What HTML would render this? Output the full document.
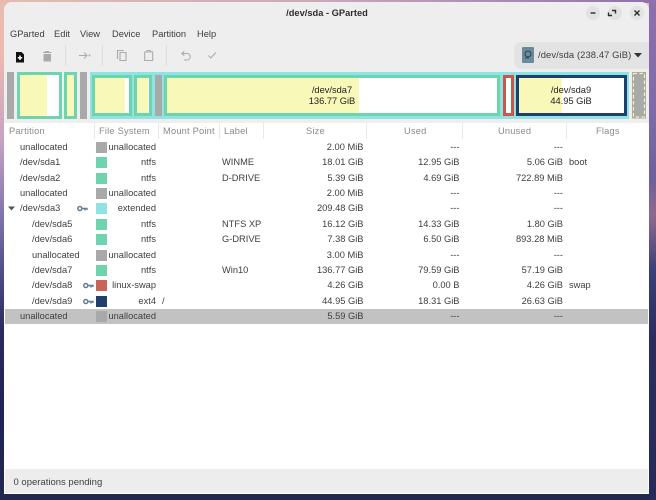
<!DOCTYPE html>
<html><head><meta charset="utf-8"><style>
*{box-sizing:border-box;margin:0;padding:0}
html,body{width:656px;height:500px;overflow:hidden}
body{position:relative;font-family:"Liberation Sans",sans-serif;font-size:9.3px;color:#3e3e3e;
background:linear-gradient(180deg,#e9bfb2 0,#e8b9b0 60px,#c6a3c4 140px,#8f7fb0 200px,#50508a 270px,#2a2c5a 330px,#1f2350 420px,#23284f 500px)}
.wp-r{position:absolute;left:649px;top:0;width:7px;height:500px;background:linear-gradient(180deg,#8f6fae 0,#7c6aa8 120px,#6d5f9c 180px,#8d6a8f 215px,#3a3f78 270px,#2a2c60 340px,#262a5a 500px)}
.wp-t{position:absolute;left:0;top:0;width:656px;height:3px;background:linear-gradient(90deg,#e6bcae,#c9a8bb 50%,#8f6fae)}
.win{position:absolute;left:4px;top:2px;width:645px;height:492px;background:#fff;border-radius:8px 8px 0 0;overflow:hidden}
.a{position:absolute;white-space:nowrap}
.hb{position:absolute;left:4px;top:2px;width:645px;height:121px;background:#eeeeee;border-radius:8px 8px 0 0}
.menu{top:28.500px;line-height:11px}
.sep{position:absolute;top:45px;width:1px;height:21px;background:#dcdcdc}
.seg{position:absolute;border:3px solid #6fd3ad;background:#fff}
.seg i{position:absolute;left:0;top:0;bottom:0;background:#f8f8b8}
.un{position:absolute;background:#a9a9a9}
.h{position:absolute;top:125px;line-height:12px;color:#8a8a8a;font-weight:400;letter-spacing:.2px;white-space:nowrap}
.hs{position:absolute;top:123px;width:1px;height:16px;background:#e9e9e9}
.r{position:absolute;left:0;width:656px;height:15px}
.r span{position:absolute;top:0;line-height:15px;white-space:nowrap}
.p{left:20px}.c{left:32px}
.fs{right:500px}
.lb{left:222px}
.sz{right:292.5px}
.us{right:196.5px}
.un2{right:93px}
.fl{left:569px}
.sw{left:96px;top:2px!important;width:11px;height:11px}
.key{position:absolute;top:4px;width:11px;height:7px}
</style></head><body>
<div class="wp-r"></div><div class="wp-t"></div>
<div class="win"></div>
<div class="hb"></div>

<div class="a" style="left:227px;width:200px;top:7.500px;text-align:center;font-weight:700;font-size:9.300px;line-height:11px;color:#2e2e2e">/dev/sda - GParted</div>
<div class="a" style="left:586px;top:6px;width:14px;height:14px;border-radius:50%;background:#e2e2e2"></div>
<div class="a" style="left:608px;top:6px;width:14px;height:14px;border-radius:50%;background:#e2e2e2"></div>
<div class="a" style="left:630px;top:6px;width:14px;height:14px;border-radius:50%;background:#e2e2e2"></div>
<svg class="a" style="left:586px;top:6px" width="58" height="14" viewBox="0 0 58 14" fill="none" stroke="#2e2e2e" stroke-width="1.400">
<path d="M4.500 7h5"/><path d="M26 4.500h3.500v3M26 9.500h-3.500v-3"/><path d="M48.500 4.500l5 5M53.500 4.500l-5 5"/></svg>

<div class="a menu" style="left:10px">GParted</div>
<div class="a menu" style="left:54px">Edit</div>
<div class="a menu" style="left:80px">View</div>
<div class="a menu" style="left:112px">Device</div>
<div class="a menu" style="left:152px">Partition</div>
<div class="a menu" style="left:197px">Help</div>

<svg class="a" style="left:0;top:45px" width="230" height="22" viewBox="0 0 230 22" fill="none">
<path d="M16 7h5.500l2.500 2.500v8h-8z" fill="#111"/><path d="M20 10.500v4.500M17.800 12.700h4.400" stroke="#fff" stroke-width="1.500"/>
<path d="M43.500 9h7.500v7.500h-7.500z" fill="#aaa"/><path d="M43 7.500h8.500M45 6.500h4" stroke="#aaa" stroke-width="1"/>
<path d="M79 10.500h8M84 7.500l3 3-3 3" stroke="#aaa" stroke-width="1"/><circle cx="89.500" cy="10.500" r="1" fill="#aaa"/>
<path d="M117.500 14v-8.500h6M120 7.500h6v8h-6z" stroke="#aaa" stroke-width="1.100"/>
<path d="M144.700 7h8v8.500h-8z M147 7v-1.500h3.400v1.500" stroke="#aaa" stroke-width="1.100"/>
<path d="M182 8.500h5a3 3 0 0 1 0 6.500h-3M184.300 6.300l-2.500 2.200 2.500 2.200" stroke="#aaa" stroke-width="1"/>
<path d="M208.300 10.500l2.500 2.500 5-5.500" stroke="#aaa" stroke-width="1.100"/>
</svg>
<div class="sep" style="left:65px"></div>
<div class="sep" style="left:102px"></div>
<div class="sep" style="left:166px"></div>

<div class="a" style="left:514px;top:42px;width:135px;height:27px;background:#e3e3e3;border-radius:7px 0 0 7px"></div>
<svg class="a" style="left:522px;top:47px" width="12" height="17" viewBox="0 0 12 17"><rect width="12" height="16" rx="1" fill="#6a8a9e"/><circle cx="6" cy="7" r="3" fill="none" stroke="#2e4050" stroke-width="1"/><path d="M3 11h4" stroke="#2e4050" stroke-width=".8"/></svg>
<div class="a" style="left:538px;top:49px;line-height:12px;font-size:9.400px;letter-spacing:.1px">/dev/sda (238.47 GiB)</div>
<svg class="a" style="left:634px;top:53px" width="8" height="5"><path d="M0 0h8l-4 4.500z" fill="#333"/></svg>

<div class="un" style="left:7px;top:72px;width:7px;height:46.500px"></div>
<div class="seg" style="left:17px;top:72px;width:44.500px;height:46.500px"><i style="width:27px"></i></div>
<div class="seg" style="left:64px;top:72px;width:13px;height:46.500px"><i style="width:7px"></i></div>
<div class="un" style="left:80px;top:72px;width:7px;height:46.500px"></div>
<div class="a" style="left:89.500px;top:72px;width:539.500px;height:46.500px;background:#8fe3e3"></div>
<div class="seg" style="left:92px;top:75px;width:40px;height:41px"><i style="width:30px"></i></div>
<div class="seg" style="left:134px;top:75px;width:18px;height:41px"><i style="width:11px"></i></div>
<div class="un" style="left:155px;top:75px;width:7px;height:41px"></div>
<div class="seg" style="left:164px;top:75px;width:336px;height:41px"><i style="width:192px"></i></div>
<div class="seg" style="left:503px;top:75px;width:11px;height:41px;border-color:#c8584e"></div>
<div class="seg" style="left:516px;top:75px;width:111px;height:41px;border-color:#1f3f6c"><i style="width:43px"></i></div>
<svg class="a" style="left:632px;top:72px" width="14" height="47" viewBox="0 0 14 47"><rect width="14" height="46.500" fill="#a9a9a9"/><rect x="1.500" y="1.500" width="11" height="43.500" fill="none" stroke="#f6f6a6" stroke-width="1.200" stroke-dasharray="3.500 2.500"/></svg>
<div class="a" style="left:282px;width:100px;top:85px;text-align:center;line-height:11px;color:#222">/dev/sda7<br>136.77 GiB</div>
<div class="a" style="left:521px;width:100px;top:85px;text-align:center;line-height:11px;color:#222">/dev/sda9<br>44.95 GiB</div>

<div class="hs" style="left:94px"></div><div class="hs" style="left:158px"></div><div class="hs" style="left:219px"></div><div class="hs" style="left:263px"></div><div class="hs" style="left:366px"></div><div class="hs" style="left:462px"></div><div class="hs" style="left:566px"></div>
<div class="h" style="left:9px">Partition</div>
<div class="h" style="left:99px">File System</div>
<div class="h" style="left:163px">Mount Point</div>
<div class="h" style="left:224px">Label</div>
<div class="h" style="left:306px">Size</div>
<div class="h" style="left:404px">Used</div>
<div class="h" style="left:498px">Unused</div>
<div class="h" style="left:596px">Flags</div>

<div class="r" style="top:140px"><span class="p">unallocated</span><span class="sw" style="background:#a9a9a9"></span><span class="fs">unallocated</span><span class="sz">2.00 MiB</span><span class="us">---</span><span class="un2">---</span></div>
<div class="r" style="top:155.300px"><span class="p">/dev/sda1</span><span class="sw" style="background:#6fd3ad"></span><span class="fs">ntfs</span><span class="lb">WINME</span><span class="sz">18.01 GiB</span><span class="us">12.95 GiB</span><span class="un2">5.06 GiB</span><span class="fl">boot</span></div>
<div class="r" style="top:170.700px"><span class="p">/dev/sda2</span><span class="sw" style="background:#6fd3ad"></span><span class="fs">ntfs</span><span class="lb">D-DRIVE</span><span class="sz">5.39 GiB</span><span class="us">4.69 GiB</span><span class="un2">722.89 MiB</span></div>
<div class="r" style="top:186px"><span class="p">unallocated</span><span class="sw" style="background:#a9a9a9"></span><span class="fs">unallocated</span><span class="sz">2.00 MiB</span><span class="us">---</span><span class="un2">---</span></div>
<div class="r" style="top:201.400px"><svg class="a" style="left:8px;top:5px" width="7" height="5"><path d="M0 .5h7l-3.500 4z" fill="#555"/></svg><span class="p">/dev/sda3</span><svg class="key" style="left:77px" viewBox="0 0 11 7" fill="none" stroke="#5f7f96" stroke-width="1.500"><circle cx="2.800" cy="3.500" r="2"/><path d="M5 3.500h5.500M8 3.500v2M10 3.500v1.500"/></svg><span class="sw" style="background:#8fe3e3"></span><span class="fs">extended</span><span class="sz">209.48 GiB</span><span class="us">---</span><span class="un2">---</span></div>
<div class="r" style="top:216.800px"><span class="c">/dev/sda5</span><span class="sw" style="background:#6fd3ad"></span><span class="fs">ntfs</span><span class="lb">NTFS XP</span><span class="sz">16.12 GiB</span><span class="us">14.33 GiB</span><span class="un2">1.80 GiB</span></div>
<div class="r" style="top:232.200px"><span class="c">/dev/sda6</span><span class="sw" style="background:#6fd3ad"></span><span class="fs">ntfs</span><span class="lb">G-DRIVE</span><span class="sz">7.38 GiB</span><span class="us">6.50 GiB</span><span class="un2">893.28 MiB</span></div>
<div class="r" style="top:247.500px"><span class="c">unallocated</span><span class="sw" style="background:#a9a9a9"></span><span class="fs">unallocated</span><span class="sz">3.00 MiB</span><span class="us">---</span><span class="un2">---</span></div>
<div class="r" style="top:262.900px"><span class="c">/dev/sda7</span><span class="sw" style="background:#6fd3ad"></span><span class="fs">ntfs</span><span class="lb">Win10</span><span class="sz">136.77 GiB</span><span class="us">79.59 GiB</span><span class="un2">57.19 GiB</span></div>
<div class="r" style="top:278.300px"><span class="c">/dev/sda8</span><svg class="key" style="left:83px" viewBox="0 0 11 7" fill="none" stroke="#5f7f96" stroke-width="1.500"><circle cx="2.800" cy="3.500" r="2"/><path d="M5 3.500h5.500M8 3.500v2M10 3.500v1.500"/></svg><span class="sw" style="background:#c8645a"></span><span class="fs">linux-swap</span><span class="sz">4.26 GiB</span><span class="us">0.00 B</span><span class="un2">4.26 GiB</span><span class="fl">swap</span></div>
<div class="r" style="top:293.700px"><span class="c">/dev/sda9</span><svg class="key" style="left:83px" viewBox="0 0 11 7" fill="none" stroke="#5f7f96" stroke-width="1.500"><circle cx="2.800" cy="3.500" r="2"/><path d="M5 3.500h5.500M8 3.500v2M10 3.500v1.500"/></svg><span class="sw" style="background:#1f3f6c"></span><span class="fs">ext4</span><span style="left:162px">/</span><span class="sz">44.95 GiB</span><span class="us">18.31 GiB</span><span class="un2">26.63 GiB</span></div>
<div class="a" style="left:5px;top:309px;width:643px;height:15px;background:#c2c2c2"></div>
<div class="r" style="top:309px"><span class="p">unallocated</span><span class="sw" style="background:#a9a9a9"></span><span class="fs">unallocated</span><span class="sz">5.59 GiB</span><span class="us">---</span><span class="un2">---</span></div>

<div class="a" style="left:5px;top:469px;width:643px;height:24px;background:#ededed"></div>
<div class="a" style="left:13.500px;top:476.500px;line-height:12px;font-size:9.500px">0 operations pending</div>
</body></html>
